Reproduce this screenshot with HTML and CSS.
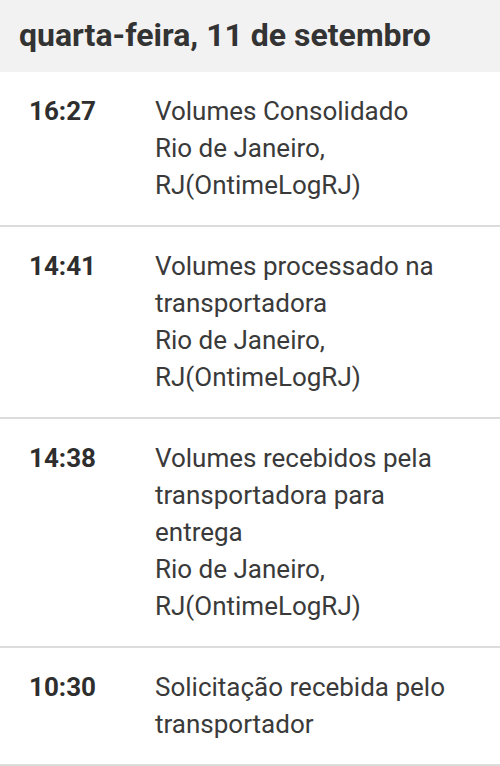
FILE: index.html
```html
<!DOCTYPE html>
<html lang="pt-BR">
<head>
    <meta charset="UTF-8">
    <meta name="viewport" content="width=device-width, initial-scale=1.0">
    <title>Rastreamento</title>
    <link rel="stylesheet" href="styles.css">
</head>
<body>

    <!-- Day Header -->
    <div class="day-header">
        <h2>quarta-feira, 11 de setembro</h2>
    </div>

    <!-- Tracking Events -->
    <ul class="events">
        <li class="event">
            <span class="time">16:27</span>
            <div class="desc">
                <p>Volumes Consolidado</p>
                <p>Rio de Janeiro, RJ(OntimeLogRJ)</p>
            </div>
        </li>
        <li class="event">
            <span class="time">14:41</span>
            <div class="desc">
                <p>Volumes processado na transportadora</p>
                <p>Rio de Janeiro, RJ(OntimeLogRJ)</p>
            </div>
        </li>
        <li class="event">
            <span class="time">14:38</span>
            <div class="desc">
                <p>Volumes recebidos pela transportadora para entrega</p>
                <p>Rio de Janeiro, RJ(OntimeLogRJ)</p>
            </div>
        </li>
        <li class="event">
            <span class="time">10:30</span>
            <div class="desc">
                <p>Solicitação recebida pelo transportador</p>
            </div>
        </li>
    </ul>

</body>
</html>
```

FILE: styles.css
```css
/* General */
body {
    margin: 0;
    padding: 0;
    font-family: Roboto, 'Noto Sans', sans-serif;
    background-color: #ffffff;
    color: #333333;
}

/* Day Header */
.day-header {
    background-color: #f2f2f2;
    height: 72px;
    display: flex;
    align-items: center;
    padding: 0 19px;
}

.day-header h2 {
    margin: 0;
    font-size: 32px;
    font-weight: bold;
    color: #333;
    padding-bottom: 2px;
}

/* Events */
.events {
    list-style: none;
    margin: 0;
    padding: 0;
}

.event {
    display: flex;
    padding: 21px 20px 21px 29px;
    border-bottom: 2px solid #dcdcdc;
}

.event:last-child {
    border-bottom-width: 3px;
}

.time {
    width: 126px;
    flex-shrink: 0;
    font-size: 26px;
    font-weight: bold;
    line-height: 37px;
    color: #2e2e2e;
}

.desc {
    width: 320px;
    font-size: 26px;
    line-height: 37px;
    color: #3a3a3a;
}

.desc p {
    margin: 0;
}
```
